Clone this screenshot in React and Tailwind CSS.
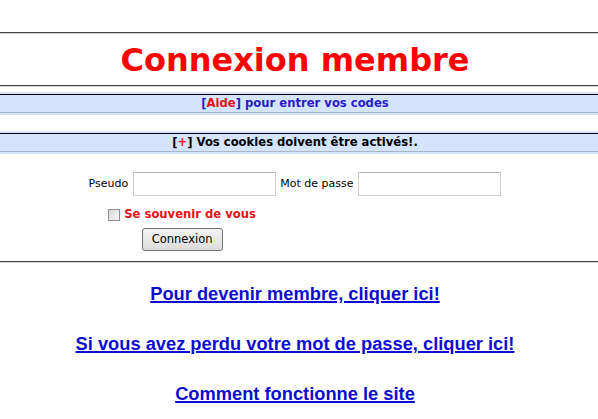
import React from "react";

const Rule = () => (
  <div>
    <div className="h-px bg-[#444444]" />
    <div className="h-px bg-[#d4d4d4]" />
  </div>
);

const Band = ({ children }) => (
  <div className="bg-[#d4e4fc] py-[2px]">
    <div className="border-t border-b border-t-black border-b-[#a9b4c4] h-[19px] flex items-center justify-center pr-[8px] text-[11.6px] font-bold">
      {children}
    </div>
  </div>
);

export default function App() {
  return (
    <div className="w-[598px] h-[419px] bg-white overflow-hidden font-['DejaVu_Sans',Verdana,sans-serif] text-black">
      <div className="h-[32px]" />
      <Rule />
      <div className="h-[51px] flex items-center justify-center pr-[8px]">
        <h1 className="text-[32px] leading-none font-bold text-[#ff0000]">Connexion membre</h1>
      </div>
      <Rule />

      <div className="h-[5px]" />
      <Band>
        <span className="text-[#2b1bcb]">
          [<a href="#" className="text-[#e8101c]">Aide</a>] pour entrer vos codes
        </span>
      </Band>

      <div className="h-[16px]" />
      <Band>
        <span>
          [<span className="text-[#e8101c]">+</span>] Vos cookies doivent être activés!.
        </span>
      </Band>

      <form className="pt-[18px] pb-[10px] flex justify-center pr-[8px]" onSubmit={(e) => e.preventDefault()}>
        <div className="flex flex-col">
          <div className="flex items-center h-[24px] text-[11px]">
            <label className="mr-[5px]">Pseudo</label>
            <input
              type="text"
              className="w-[143px] h-[24px] border border-[#cfcfcf] border-t-[#b9b9b9] outline-none px-1"
            />
            <label className="ml-[4px] mr-[5px]">Mot de passe</label>
            <input
              type="password"
              className="w-[143px] h-[24px] border border-[#cfcfcf] border-t-[#b9b9b9] outline-none px-1"
            />
          </div>
          <div className="w-[187px] flex flex-col items-center">
            <label className="mt-[12px] h-[13px] flex items-center">
              <input
                type="checkbox"
                className="appearance-none w-[12px] h-[12px] mr-[4px] border border-[#8f8f8f] bg-linear-to-br from-[#d8d8d8] to-[#fafafa]"
              />
              <span className="text-[11.6px] font-bold text-[#e8101c]">Se souvenir de vous</span>
            </label>
            <button
              type="submit"
              className="mt-[7px] w-[81px] h-[23px] border border-[#707070] rounded-[3px] bg-linear-to-b from-[#f4f4f4] to-[#dcdcdc] text-[11.5px] text-black"
            >
              Connexion
            </button>
          </div>
        </div>
      </form>
      <Rule />

      <div className="pt-[6px] flex flex-col items-center pr-[8px] font-['Liberation_Sans',Arial,sans-serif] text-[18.3px] font-bold">
        <div className="h-[50px] flex items-center">
          <a href="#" className="text-[#0c0cd0] underline decoration-[1.5px]">Pour devenir membre, cliquer ici!</a>
        </div>
        <div className="h-[50px] flex items-center">
          <a href="#" className="text-[#0c0cd0] underline decoration-[1.5px]">Si vous avez perdu votre mot de passe, cliquer ici!</a>
        </div>
        <div className="h-[50px] flex items-center">
          <a href="#" className="text-[#0c0cd0] underline decoration-[1.5px]">Comment fonctionne le site</a>
        </div>
      </div>
    </div>
  );
}
